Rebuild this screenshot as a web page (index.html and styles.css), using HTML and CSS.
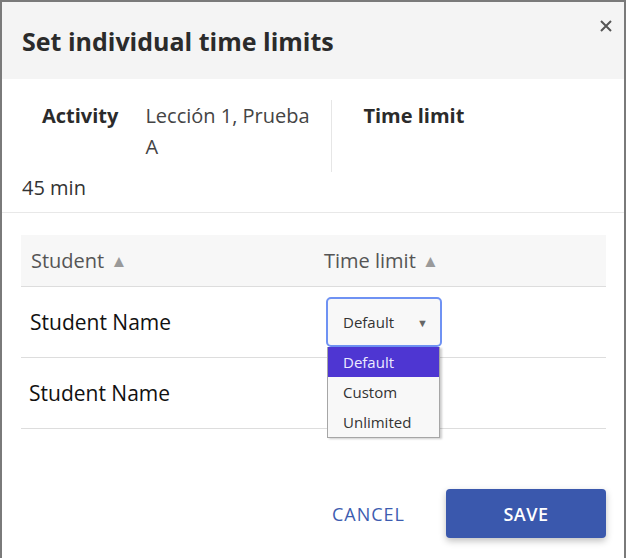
FILE: index.html
```html
<!DOCTYPE html>
<html lang="en">
<head>
    <meta charset="UTF-8">
    <meta name="viewport" content="width=device-width, initial-scale=1.0">
    <title>Set individual time limits</title>
    <link rel="stylesheet" href="styles.css">
</head>
<body>
    <div class="dialog">
        <div class="dialog-header">
            <h2>Set individual time limits</h2>
            <button class="close" aria-label="Close">
                <svg width="12" height="12" viewBox="0 0 12 12">
                    <path d="M1 1 L11 11 M11 1 L1 11" stroke="#555" stroke-width="2" fill="none"/>
                </svg>
            </button>
        </div>

        <div class="summary">
            <div class="summary-row">
                <div class="summary-label">Activity</div>
                <div class="summary-value">Lección 1, Prueba A</div>
                <div class="summary-divider"></div>
                <div class="summary-label time">Time limit</div>
            </div>
            <div class="summary-extra">45 min</div>
        </div>

        <table class="students">
            <thead>
                <tr>
                    <th class="col-student">Student <span class="sort">&#9650;</span></th>
                    <th>Time limit <span class="sort">&#9650;</span></th>
                </tr>
            </thead>
            <tbody>
                <tr>
                    <td class="name">Student Name</td>
                    <td>
                        <div class="picker">
                            <div class="select">
                                <span>Default</span>
                                <span class="caret">&#9660;</span>
                            </div>
                            <ul class="options">
                                <li class="active">Default</li>
                                <li>Custom</li>
                                <li>Unlimited</li>
                            </ul>
                        </div>
                    </td>
                </tr>
                <tr>
                    <td class="name second">Student Name</td>
                    <td></td>
                </tr>
            </tbody>
        </table>

        <div class="dialog-footer">
            <button class="btn-cancel">CANCEL</button>
            <button class="btn-save">SAVE</button>
        </div>
    </div>
</body>
</html>
```

FILE: styles.css
```css
body {
    margin: 0;
    font-family: "Open Sans", "Noto Sans", Arial, sans-serif;
    background: #fff;
    color: #222;
    overflow: hidden;
}
.dialog {
    width: 622px;
    height: 580px;
    border: 2px solid #7a7a7a;
    border-bottom: none;
    background: #fff;
}
.dialog-header {
    display: flex;
    justify-content: space-between;
    background-color: #f4f4f4;
    height: 77px;
    padding: 0 12px 0 20px;
}
.dialog-header h2 {
    margin: 0;
    padding-top: 24px;
    font-size: 25px;
    font-weight: 700;
    color: #2b2b2b;
    line-height: 30px;
}
.close {
    background: none;
    border: none;
    padding: 0;
    height: 12px;
    margin-top: 18px;
    cursor: pointer;
}
.summary {
    padding: 21px 20px 9px 20px;
    border-bottom: 1px solid #e8e8e8;
    font-size: 20px;
    line-height: 31px;
    color: #333;
}
.summary-row {
    display: flex;
}
.summary-label {
    font-weight: 700;
    color: #2b2b2b;
    padding-left: 20px;
}
.summary-label.time {
    padding-left: 31px;
}
.summary-value {
    width: 170px;
    margin-left: 27px;
    color: #444;
}
.summary-divider {
    width: 1px;
    height: 72px;
    background: #e6e6e6;
    margin-left: 16px;
}
.summary-extra {
    color: #333;
}
.students {
    margin: 22px 0 0 19px;
    width: 585px;
    border-collapse: collapse;
}
.students th {
    background: #f7f7f7;
    height: 51px;
    font-size: 20px;
    font-weight: 400;
    color: #555;
    text-align: left;
    padding: 0 0 0 3px;
    border-bottom: 1px solid #ddd;
}
.students th.col-student {
    width: 290px;
    padding-left: 10px;
}
.sort {
    font-size: 17px;
    color: #9a9a9a;
    vertical-align: 1px;
    margin-left: 1px;
}
.students td {
    height: 70px;
    border-bottom: 1px solid #ddd;
    padding: 0;
    vertical-align: middle;
}
.students td.name {
    padding-left: 9px;
    font-size: 21px;
    color: #111;
}
.students td.name.second {
    padding-left: 8px;
}
.picker {
    position: relative;
    width: 116px;
    margin-left: 5px;
}
.select {
    display: flex;
    justify-content: space-between;
    align-items: center;
    height: 46px;
    border: 2px solid #6f92f3;
    border-radius: 5px;
    background: #f8f8f8;
    padding: 0 12px 0 15px;
    font-size: 15px;
    color: #333;
}
.caret {
    font-size: 11px;
    color: #666;
}
.options {
    position: absolute;
    top: 50px;
    left: 1px;
    width: 111px;
    margin: 0;
    padding: 0;
    list-style: none;
    background: #f8f8f8;
    border: 1px solid #a6a6a6;
    border-top: none;
    box-shadow: 2px 1px 2px rgba(0, 0, 0, 0.2);
    z-index: 2;
}
.options li {
    height: 30px;
    line-height: 30px;
    padding-left: 15px;
    font-size: 15px;
    color: #333;
}
.options li.active {
    background-color: #4e36d2;
    color: #ecebff;
}
.dialog-footer {
    display: flex;
    justify-content: flex-end;
    align-items: center;
    gap: 31px;
    margin-top: 60px;
    padding-right: 18px;
}
.btn-cancel {
    background: none;
    border: none;
    font-family: inherit;
    font-size: 18px;
    letter-spacing: 1px;
    color: #3d5cb0;
    padding: 0 10px;
    cursor: pointer;
}
.btn-save {
    width: 160px;
    height: 49px;
    background-color: #3a58ad;
    color: #fff;
    border: none;
    border-radius: 4px;
    font-family: inherit;
    font-size: 18px;
    font-weight: 600;
    letter-spacing: 0.5px;
    box-shadow: 0 3px 7px rgba(0, 0, 0, 0.25);
    cursor: pointer;
}
```
